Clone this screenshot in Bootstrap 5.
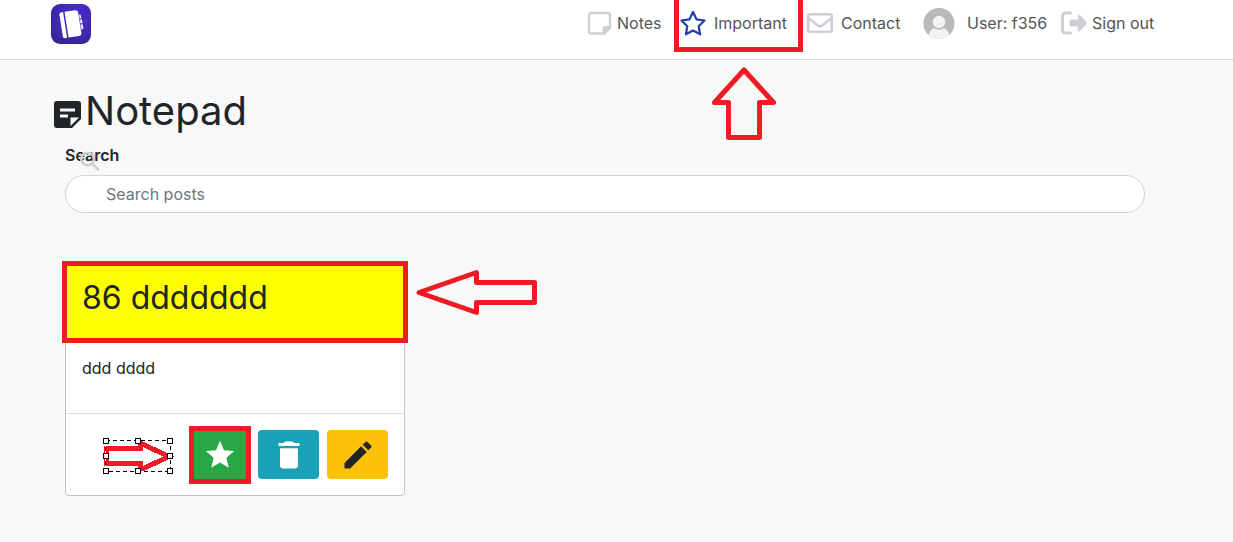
<!DOCTYPE html>
<html lang="en">
<head>
<meta charset="utf-8">
<meta name="viewport" content="width=device-width, initial-scale=1">
<title>Notepad</title>
<link href="https://cdn.jsdelivr.net/npm/bootstrap@5.3.0/dist/css/bootstrap.min.css" rel="stylesheet">
<style>
  body { font-family: Inter, "Liberation Sans", sans-serif; font-size: 16px; line-height: 24px; color: #212529; background: #f8f8f8; }
  .page-gutter { padding-left: 51px; padding-right: 78px; }
  .topbar { height: 60px; border-bottom: 1px solid #d9d9db; padding-bottom: 12px; }
  .topbar a { color: #555; text-decoration: none; white-space: nowrap; }
  .topbar svg { flex: none; }
  .topbar nav { padding-bottom: 2px; }
  .nav-notes { width: 93px; }
  .nav-important { width: 127px; }
  .nav-contact { width: 116px; }
  .nav-user { width: 138px; }
  .nav-out { width: 94px; }
  .frame-nav { left: -6px; top: -14px; width: 129px; height: 57px; border: 5px solid #ed1c24; pointer-events: none; }
  .arrow-up { left: 30px; top: 56px; z-index: 2; }
  .page-title { font-size: 40px; line-height: 48px; font-weight: 400; padding-top: 27px; padding-left: 3px; }
  .page-title svg { margin-top: 6px; }
  .inset { padding-left: 14px; padding-right: 10px; }
  .search-label { font-weight: 600; line-height: 24px; }
  .search-glass { left: 14px; top: 8px; }
  .search-box { height: 38px; border-radius: 19px; border-color: #ced4da; padding-left: 40px; }
  .search-box::placeholder { color: #6c757d; }
  .note { width: 340px; border: 1px solid #c4c4c6; border-radius: 4px; margin-top: 51px; }
  .note-head { height: 74px; background: #ff0; outline: 5px solid #ed1c24; outline-offset: -1px; padding: 14px 16px; }
  .note-head h2 { font-size: 32px; line-height: 38px; font-weight: 400; }
  .note-text { height: 74px; padding: 17px 16px; }
  .note-foot { height: 82px; border-top: 1px solid #dfdfdf; padding: 0 16px; gap: 8px; }
  .arrow-left { left: 350px; top: 3px; }
  .tool { width: 61px; height: 49px; border: 0; border-radius: 4px; padding: 0; }
  .tool-star { background: #28a745; border-radius: 0; width: 52px; height: 48px; outline: 5px solid #ed1c24; margin: 0 4px 0 0; }
  .tool-bin { background: #17a2b8; }
  .tool-edit { background: #ffc107; }
  .selected-arrow { margin-right: 12px; margin-top: 2px; }
</style>
</head>
<body>
<header class="topbar page-gutter bg-white d-flex align-items-center justify-content-between">
  <a href="#" aria-label="Home">
    <svg class="d-block" width="40" height="40" viewBox="0 0 40 40">
      <defs><radialGradient id="violet" cx=".6" cy=".3" r=".85"><stop offset=".35" stop-color="#4529c2"/><stop offset="1" stop-color="#35248e"/></radialGradient></defs>
      <rect width="40" height="40" rx="9" fill="url(#violet)"/>
      <g transform="rotate(-9 20 20)" fill="#fff">
        <path d="M12 7h2v26h-2a2 2 0 0 1-2-2V9a2 2 0 0 1 2-2zM15.500 7H26a3 3 0 0 1 3 3v20a3 3 0 0 1-3 3H15.500z"/>
        <path d="M29 12h1a1 1 0 0 1 1 1v3h-2zM29 17h2.500v4H29zM29 22h2.500v4a1 1 0 0 1-1 1H29z"/>
        <path d="M29.300 10v20" stroke="#4028b5" stroke-width=".5"/>
      </g>
    </svg>
  </a>
  <nav class="d-flex align-items-center">
    <a href="#" class="nav-notes d-flex align-items-center">
      <svg class="me-1" width="26" height="26" viewBox="0 0 26 26"><path d="M4 3h17a2 2 0 0 1 2 2v13L17.500 23.500H4a2 2 0 0 1-2-2V5a2 2 0 0 1 2-2z" fill="none" stroke="#cfced4" stroke-width="2.400"/><path d="M15.500 23.500v-5a2.500 2.500 0 0 1 2.500-2.500h5v2.500L17.500 23.500z" fill="#cfced4"/></svg>Notes</a>
    <a href="#" class="nav-important d-flex align-items-center position-relative">
      <svg class="me-2" width="26" height="28" viewBox="0 0 26 28"><path d="M13 3l3.500 7.300 8 1.200-5.800 5.700 1.400 8.100L13 21.500l-7.100 3.800 1.400-8.100L1.500 11.500l8-1.200z" fill="none" stroke="#1f3fae" stroke-width="2.200" stroke-linejoin="round"/></svg>Important
      <span class="frame-nav position-absolute"></span>
      <svg class="arrow-up position-absolute" width="68" height="78" viewBox="0 0 68 78"><path d="M34 5L63.500 37.500H49.500V72.500H18.500V37.500H4.500z" fill="none" stroke="#ed1c24" stroke-width="5" stroke-linejoin="round"/></svg>
    </a>
    <a href="#" class="nav-contact d-flex align-items-center">
      <svg width="26" height="20" viewBox="0 0 26 20"><rect x="1.300" y="1.300" width="23.400" height="17.400" rx="2" fill="none" stroke="#cfced4" stroke-width="2.600"/><path d="M2 5.500l8.500 6.700q2.500 1.800 5 0L24 5.500" fill="none" stroke="#cfced4" stroke-width="2.600"/></svg><span class="ps-2">Contact</span></a>
    <a href="#" class="nav-user d-flex align-items-center">
      <svg class="me-2" width="32" height="32" viewBox="0 0 32 32"><defs><clipPath id="round"><circle cx="16" cy="16.500" r="15.500"/></clipPath></defs><g clip-path="url(#round)"><path fill="#b9b9b9" d="M0 0h32v32H0z"/><circle cx="16" cy="31" r="11" fill="#f3f3f3"/><circle cx="16" cy="15" r="7" fill="#f3f3f3" stroke="#b9b9b9" stroke-width="1.500"/></g></svg><span class="ps-1">User: f356</span></a>
    <a href="#" class="nav-out d-flex align-items-center">
      <svg width="27" height="24" viewBox="0 0 27 24"><path d="M9.500 2H4.500a3 3 0 0 0-3 3v14a3 3 0 0 0 3 3h5" fill="none" stroke="#cfced4" stroke-width="3" stroke-linecap="round"/><path d="M10 8.500h7V5q0-2.500 2-1l6.500 7q1 1 0 2L19 20q-2 1.500-2-1v-3.500h-7q-1.500 0-1.500-1.500v-4q0-1.500 1.500-1.500z" fill="#cfced4"/></svg><span class="ps-1">Sign out</span></a>
  </nav>
</header>

<main class="page-gutter">
  <h1 class="page-title d-flex align-items-center mb-0">
    <svg class="me-1" width="27" height="27" viewBox="0 0 27 27"><path d="M3 0h21a3 3 0 0 1 3 3v15l-9 9H3a3 3 0 0 1-3-3V3a3 3 0 0 1 3-3z" fill="#212529"/><path d="M6 7.500h15v3H6zM6 13.500h8v3H6zM16.500 25v-8.500H25z" fill="#f8f8f8"/></svg>Notepad</h1>
  <div class="inset">
    <div class="position-relative pt-2 pb-2">
      <label class="search-label d-block" for="posts">Search</label>
      <svg class="search-glass position-absolute mt-2" width="21" height="21" viewBox="0 0 21 21"><circle cx="8.500" cy="8" r="6.300" fill="none" stroke="#cfced4" stroke-width="2.600"/><path d="M13 12.500l6 6" stroke="#cfced4" stroke-width="2.800" stroke-linecap="round"/></svg>
    </div>
    <input id="posts" class="search-box form-control" type="text" placeholder="Search posts">

    <article class="note bg-white">
      <div class="note-head position-relative">
        <h2 class="mb-0">86 ddddddd</h2>
        <svg class="arrow-left position-absolute" width="124" height="48" viewBox="0 0 124 48"><path d="M3 24.500L60.500 4.500V14.500H118.500V34.500H60.500V44.500z" fill="none" stroke="#ed1c24" stroke-width="5" stroke-linejoin="round"/></svg>
      </div>
      <p class="note-text mb-0">ddd dddd</p>
      <div class="note-foot d-flex align-items-center justify-content-end">
        <svg class="selected-arrow" width="72" height="38" viewBox="0 0 72 38" shape-rendering="crispEdges">
          <path d="M4 11.500H38V6L67 19.500 38 33v-6.500H4z" fill="none" stroke="#ed1c24" stroke-width="5"/>
          <path d="M3.500 3.500h65v31h-65z" fill="none" stroke="#fff"/>
          <path d="M3.500 3.500h65v31h-65z" fill="none" stroke="#000" stroke-dasharray="4 3"/>
          <path d="M1.500 1.500h5v5h-5zM33.500 1.500h5v5h-5zM65.500 1.500h5v5h-5zM1.500 16.500h5v5h-5zM65.500 16.500h5v5h-5zM1.500 31.500h5v5h-5zM33.500 31.500h5v5h-5zM65.500 31.500h5v5h-5z" fill="#fff" stroke="#000"/>
        </svg>
        <button class="tool tool-star btn" type="button" aria-label="Mark important"><svg width="34" height="34" viewBox="0 0 24 24" fill="#fff"><path d="M12 17.270L18.180 21l-1.640-7.030L22 9.240l-7.190-.61L12 2 9.190 8.630 2 9.240l5.460 4.730L5.820 21z"/></svg></button>
        <button class="tool tool-bin btn" type="button" aria-label="Delete"><svg width="36" height="36" viewBox="0 0 24 24" fill="#fff"><path d="M6 19c0 1.100.9 2 2 2h8c1.100 0 2-.9 2-2V7.500H6zM19 4h-3.500l-1-1h-5l-1 1H5v2h14z"/></svg></button>
        <button class="tool tool-edit btn" type="button" aria-label="Edit"><svg width="36" height="36" viewBox="0 0 24 24" fill="#212529"><path d="M3 17.250V21h3.750L17.810 9.940l-3.750-3.750zM20.710 7.040a1 1 0 0 0 0-1.410l-2.340-2.340a1 1 0 0 0-1.410 0l-1.830 1.830 3.750 3.750z"/></svg></button>
      </div>
    </article>
  </div>
</main>
<script src="https://cdn.jsdelivr.net/npm/bootstrap@5.3.0/dist/js/bootstrap.bundle.min.js"></script>
</body>
</html>
